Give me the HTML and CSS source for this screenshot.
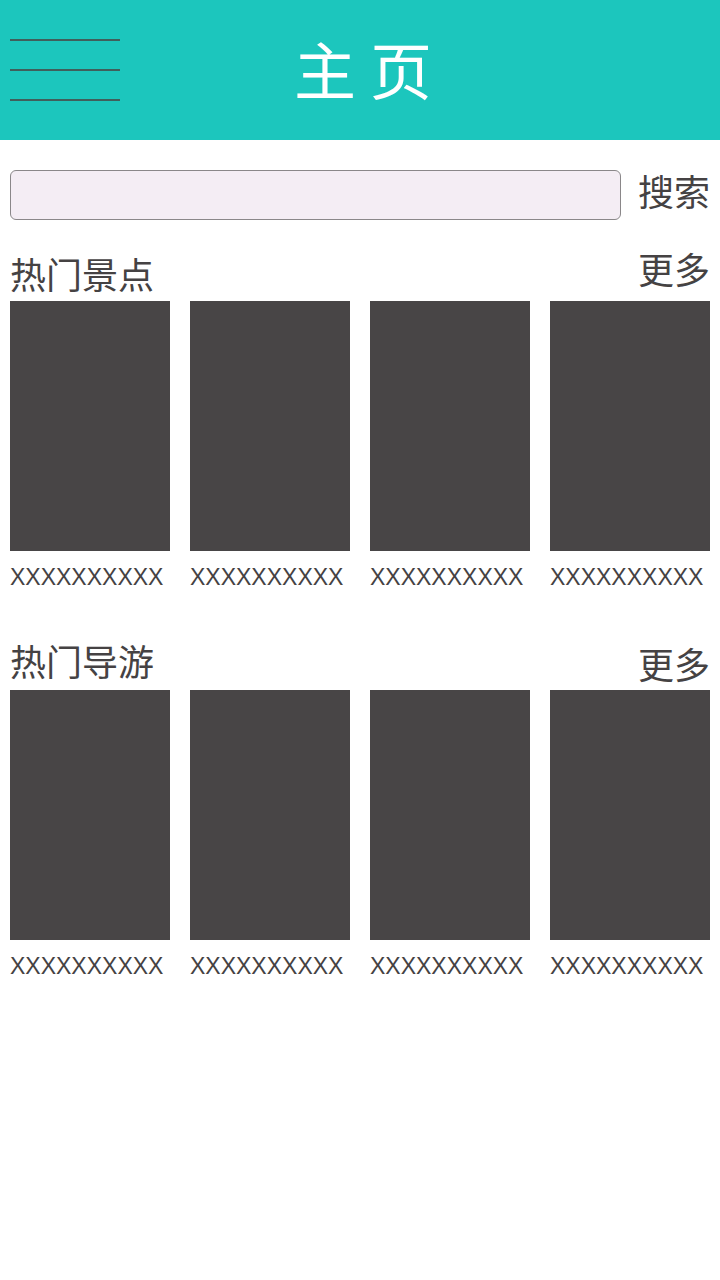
FILE: index.html
```html
<!DOCTYPE html>
<html>
<head>
    <title>主页</title>
	<link rel="stylesheet" href="styles.css">
</head>
<body>
	<div class="header">
		<div class="menu">
			<span></span>
			<span></span>
			<span></span>
		</div>
		<h1>主 页</h1>
	</div>

	<div class="page">
		<div class="search">
			<input type="text" id="kw">
			<span class="search-btn">搜索</span>
		</div>

		<div class="section">
			<div class="sec-head">
				<span class="sec-title">热门景点</span>
				<span class="more more-up">更多</span>
			</div>
			<div class="cards">
				<div class="card"><div class="pic"></div><p>XXXXXXXXXX</p></div>
				<div class="card"><div class="pic"></div><p>XXXXXXXXXX</p></div>
				<div class="card"><div class="pic"></div><p>XXXXXXXXXX</p></div>
				<div class="card"><div class="pic"></div><p>XXXXXXXXXX</p></div>
			</div>
		</div>

		<div class="section second">
			<div class="sec-head">
				<span class="sec-title">热门导游</span>
				<span class="more">更多</span>
			</div>
			<div class="cards">
				<div class="card"><div class="pic"></div><p>XXXXXXXXXX</p></div>
				<div class="card"><div class="pic"></div><p>XXXXXXXXXX</p></div>
				<div class="card"><div class="pic"></div><p>XXXXXXXXXX</p></div>
				<div class="card"><div class="pic"></div><p>XXXXXXXXXX</p></div>
			</div>
		</div>
	</div>
</body>
</html>
```

FILE: styles.css
```css
body{
	margin:0;
	font-family:"Liberation Sans","Noto Sans CJK SC",sans-serif;
	color:#454243;
	background:#fff;
}
.header{
	height:140px;
	background-color:#1cc6bd;
	display:grid;
	grid-template-columns:110px 1fr 110px;
	align-items:center;
	padding:0 10px;
}
.menu{
	display:flex;
	flex-direction:column;
	gap:28px;
}
.menu span{
	display:block;
	height:2px;
	background-color:#3f5f5c;
}
h1{
	margin:0 0 4px;
	text-align:center;
	padding-left:6px;
	font-family:"Noto Sans CJK SC",sans-serif;
	font-weight:normal;
	font-size:62px;
	color:#fff;
	line-height:1;
}
.page{
	padding:0 10px;
}
.search{
	margin-top:30px;
	height:50px;
	display:flex;
	align-items:flex-start;
	gap:17px;
}
.search input{
	flex:1;
	height:50px;
	box-sizing:border-box;
	margin:0;
	border:1px solid #8a8789;
	border-radius:6px;
	background-color:#f4edf4;
}
.search-btn{
	font-family:"Noto Sans CJK SC",sans-serif;
	font-size:36px;
	line-height:40px;
}
.section{
	margin-top:30px;
}
.section.second{
	margin-top:47px;
}
.sec-head{
	height:51px;
	display:flex;
	justify-content:space-between;
	align-items:flex-end;
	font-family:"Noto Sans CJK SC",sans-serif;
	font-size:36px;
	line-height:1;
}
.sec-title{
	padding-bottom:10px;
}
.more-up{
	padding-bottom:15px;
}
.second .sec-title{
	padding-bottom:12px;
}
.second .more{
	padding-bottom:9px;
}
.cards{
	display:grid;
	grid-template-columns:repeat(4,160px);
	gap:20px;
}
.pic{
	height:250px;
	background-color:#484546;
}
.card p{
	margin:11px 0 0;
	font-size:23px;
	line-height:30px;
}
```
